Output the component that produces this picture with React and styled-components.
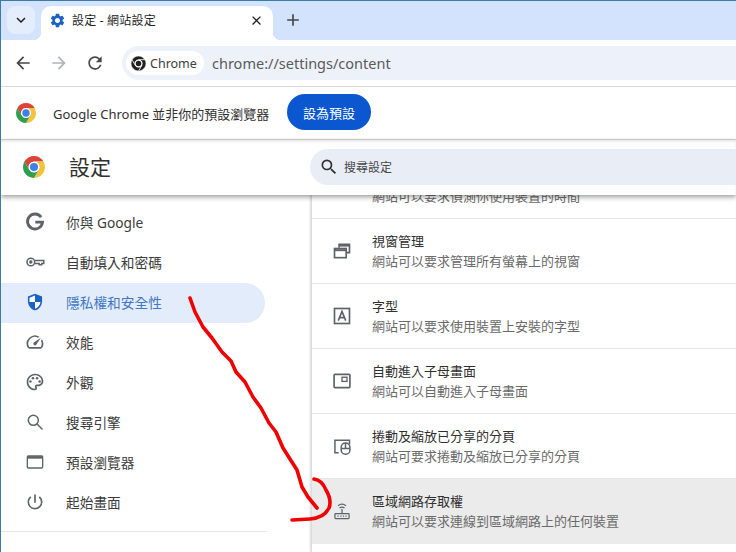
import React from 'react';
import styled, { createGlobalStyle } from 'styled-components';
import {
  MdSettings,
  MdSearch,
  MdClose,
  MdAdd,
  MdArrowBack,
  MdArrowForward,
  MdRefresh,
  MdKeyboardArrowDown,
  MdOutlineSpeed,
  MdOutlinePalette,
  MdOutlinePowerSettingsNew,
} from 'react-icons/md';

const GlobalStyle = createGlobalStyle`
  html, body {
    margin: 0;
    padding: 0;
    background: #fff;
    overflow: hidden;
  }
`;

const FONT = `"Noto Sans", "Noto Sans CJK TC", sans-serif`;

const Page = styled.div`
  position: relative;
  width: 736px;
  height: 552px;
  box-sizing: border-box;
  border-left: 1px solid #3a7ca5;
  border-top: 1px solid #3a7ca5;
  overflow: hidden;
  display: flex;
  flex-direction: column;
  font-family: ${FONT};
  color: #1f1f1f;
  background: #fff;
`;

const TabStrip = styled.div`
  height: 39px;
  background: #d3e3fd;
  display: flex;
  align-items: flex-end;
  padding-left: 6px;
  flex: none;
`;

const TabSearch = styled.div`
  width: 28px;
  height: 28px;
  margin-bottom: 6px;
  margin-right: 6px;
  border-radius: 8px;
  background: #e4edfc;
  display: flex;
  align-items: center;
  justify-content: center;
  color: #1f1f1f;
  font-size: 18px;
`;

const Tab = styled.div`
  position: relative;
  width: 232px;
  height: 34px;
  box-sizing: border-box;
  padding: 0 9px 6px 8px;
  background: #fff;
  border-radius: 10px 10px 0 0;
  display: flex;
  align-items: center;
  gap: 6px;
  font-size: 12px;
  color: #1f1f1f;

  &::before,
  &::after {
    content: '';
    position: absolute;
    bottom: 0;
    width: 8px;
    height: 8px;
  }
  &::before {
    left: -8px;
    background: radial-gradient(circle at 0 0, #d3e3fd 8px, #fff 8.5px);
  }
  &::after {
    right: -8px;
    background: radial-gradient(circle at 100% 0, #d3e3fd 8px, #fff 8.5px);
  }
`;

const TabTitle = styled.span`
  flex: 1;
  letter-spacing: 0.2px;
`;

const NewTab = styled.div`
  margin-left: 10px;
  margin-bottom: 6px;
  height: 28px;
  display: flex;
  align-items: center;
  font-size: 20px;
  color: #474747;
`;

const Toolbar = styled.div`
  height: 47px;
  flex: none;
  box-sizing: border-box;
  border-bottom: 1px solid #d9d9d9;
  display: flex;
  align-items: center;
  padding-left: 12px;
`;

const NavButton = styled.div`
  width: 20px;
  height: 20px;
  margin-right: 16px;
  font-size: 20px;
  display: flex;
  color: ${(p) => (p.$disabled ? '#b0b3b8' : '#474747')};
`;

const Omnibox = styled.div`
  flex: 1;
  height: 34px;
  margin-left: 1px;
  margin-right: -20px;
  border-radius: 17px;
  background: #edf2fa;
  display: flex;
  align-items: center;
  padding-left: 4px;
`;

const Chip = styled.div`
  width: 78px;
  height: 24px;
  box-sizing: border-box;
  border-radius: 12px;
  background: #fff;
  display: flex;
  align-items: center;
  gap: 4px;
  padding-left: 5px;
  font-size: 12.5px;
  color: #3c3c3c;
`;

const Url = styled.span`
  margin-left: 8px;
  font-size: 14.5px;
  color: #5a5a5a;
`;

const InfoBar = styled.div`
  height: 53px;
  flex: none;
  box-sizing: border-box;
  border-bottom: 1px solid #d4d4d4;
  display: flex;
  align-items: center;
  padding-left: 15px;
  font-size: 13px;
`;

const InfoText = styled.span`
  margin-left: 17px;
  width: 234px;
  white-space: nowrap;
  color: #303030;
`;

const DefaultButton = styled.div`
  width: 84px;
  height: 36px;
  margin-top: -2px;
  border-radius: 18px;
  background: #0b57d0;
  color: #fff;
  display: flex;
  align-items: center;
  justify-content: center;
  font-size: 13px;
`;

const SettingsHeader = styled.div`
  position: relative;
  z-index: 2;
  height: 55px;
  flex: none;
  box-sizing: border-box;
  background: #fff;
  box-shadow: 0 2px 5px rgba(0, 0, 0, 0.4), inset 0 2px 2px rgba(0, 0, 0, 0.08);
  display: flex;
  align-items: center;
  padding: 0 0 1px 22px;
`;

const HeaderTitle = styled.h1`
  margin: -3px 0 0 24px;
  width: 241px;
  font-size: 21px;
  font-weight: 400;
  color: #303030;
`;

const SearchBox = styled.div`
  flex: 1;
  height: 36px;
  margin-right: -20px;
  border-radius: 18px;
  background: #e9eef6;
  display: flex;
  align-items: center;
  gap: 5px;
  padding-left: 9px;
  font-size: 12px;
  color: #474747;

  svg {
    font-size: 20px;
    color: #303030;
  }
`;

const Body = styled.div`
  flex: 1;
  display: flex;
  min-height: 0;
`;

const Sidebar = styled.nav`
  width: 310px;
  flex: none;
  padding-top: 8px;
  box-sizing: border-box;
`;

const NavItem = styled.div`
  width: 264px;
  height: 40px;
  box-sizing: border-box;
  padding: 0 0 2px 24px;
  display: flex;
  align-items: center;
  gap: 21px;
  font-size: 13.7px;
  border-radius: ${(p) => (p.$active ? '0 20px 20px 0' : '0')};
  background: ${(p) => (p.$active ? '#e3ecfa' : 'transparent')};
  color: ${(p) => (p.$active ? '#3f78c4' : '#3c3c3c')};

  svg {
    width: 20px;
    height: 20px;
    flex: none;
    color: ${(p) => (p.$active ? '#1a62c5' : '#5f6368')};
  }
`;

const NavDivider = styled.div`
  width: 266px;
  height: 1px;
  margin-top: 8px;
  background: #e6e6e6;
`;

const Content = styled.main`
  flex: 1;
  min-width: 0;
  border-left: 1px solid #dcdcdc;
  box-shadow: -1px 0 2px rgba(0, 0, 0, 0.14);
  overflow: hidden;
`;

const Row = styled.div`
  height: ${(p) => (p.$clipped ? '24px' : '65px')};
  box-sizing: border-box;
  border-bottom: 1px solid ${(p) => (p.$selected ? 'transparent' : '#e6e6e6')};
  background: ${(p) => (p.$selected ? '#ebebeb' : '#fff')};
  display: flex;
  align-items: ${(p) => (p.$clipped ? 'flex-end' : 'center')};
  overflow: hidden;
  padding: ${(p) => (p.$clipped ? '0 0 12px 20px' : '0 0 0 20px')};
  gap: 20px;
`;

const RowIcon = styled.div`
  width: 20px;
  height: 20px;
  flex: none;
  color: #5f6368;

  svg {
    width: 20px;
    height: 20px;
    display: block;
  }
`;

const RowText = styled.div`
  display: flex;
  flex-direction: column;
  gap: 2px;
  padding-bottom: 1px;
  white-space: nowrap;
`;

const RowTitle = styled.div`
  font-size: 13px;
  line-height: 18px;
  color: #303030;
`;

const RowSub = styled.div`
  font-size: 13px;
  line-height: 18px;
  color: #6a6a6a;
`;

const Scribble = styled.svg`
  position: absolute;
  left: -1px;
  top: -1px;
  z-index: 3;
  pointer-events: none;
`;

const ChromeLogo = ({ size = 20, mono = false }) => {
  const seam = mono ? { stroke: '#fff', strokeWidth: 1 } : {};
  return (
    <svg width={size} height={size} viewBox="0 0 24 24" style={{ flex: 'none' }}>
      <path d="M22.39 6A12 12 0 0 0 1.61 6L6.8 15A6 6 0 0 1 12 6Z" fill={mono ? '#202020' : '#db4437'} {...seam} />
      <path d="M22.39 6H12A6 6 0 0 1 17.2 15L12 24A12 12 0 0 0 22.39 6Z" fill={mono ? '#202020' : '#f5c33b'} {...seam} />
      <path d="M1.61 6L6.8 15A6 6 0 0 0 17.2 15L12 24A12 12 0 0 1 1.61 6Z" fill={mono ? '#202020' : '#2f9e4f'} {...seam} />
      <circle cx="12" cy="12" r="5.6" fill="#fff" />
      <circle cx="12" cy="12" r="4.4" fill={mono ? '#202020' : '#3f7fe8'} />
    </svg>
  );
};

const GoogleG = () => (
  <svg viewBox="0 0 24 24" fill="none" stroke="currentColor" strokeWidth="3.4">
    <path d="M19.4 6.2A9 9 0 1 0 21 12.2H12.4" />
  </svg>
);

const KeyIcon = () => (
  <svg viewBox="0 0 24 24" fill="none" stroke="currentColor" strokeWidth="1.8">
    <circle cx="7" cy="12" r="4.6" />
    <circle cx="7" cy="12" r="1.2" fill="currentColor" />
    <path d="M11.6 10.2H22.5V13.8H20V15.4H17V13.8H11.6" />
  </svg>
);

const ShieldIcon = () => (
  <svg viewBox="0 0 24 24">
    <path d="M12 2L3.5 5.4V11c0 5.2 3.6 9.8 8.5 11 4.9-1.2 8.5-5.8 8.5-11V5.4Z" fill="currentColor" />
    <path d="M12 4.2V12H5.4V6.8ZM12 12H18.6C18.2 15.6 15.6 18.9 12 20Z" fill="#fff" />
  </svg>
);

const SearchThin = () => (
  <svg viewBox="0 0 24 24" fill="none" stroke="currentColor" strokeWidth="1.8">
    <circle cx="10" cy="10" r="6" />
    <path d="M14.5 14.5L21 21" />
  </svg>
);

const BrowserIcon = () => (
  <svg viewBox="0 0 24 24" fill="none" stroke="currentColor">
    <rect x="2.8" y="4.8" width="18.4" height="14.4" rx="1.2" strokeWidth="1.6" />
    <path d="M2.8 6.5H21.2" strokeWidth="3" />
  </svg>
);

const WindowsIcon = () => (
  <svg viewBox="0 0 24 24" fill="none" stroke="currentColor" strokeWidth="2">
    <path d="M8.5 8V4H21V14H17" />
    <path d="M8.5 5.5H21" strokeWidth="2.4" />
    <rect x="3" y="9" width="14" height="11" />
    <path d="M3 11H17" strokeWidth="2.4" />
  </svg>
);

const FontIcon = () => (
  <svg viewBox="0 0 24 24" fill="none" stroke="currentColor" strokeWidth="2">
    <rect x="3" y="3" width="18" height="18" />
    <path d="M7.5 17.5L12 6.5L16.5 17.5M9 14H15" />
  </svg>
);

const PipIcon = () => (
  <svg viewBox="0 0 24 24" fill="none" stroke="currentColor" strokeWidth="2">
    <rect x="2.5" y="4" width="19" height="16" rx="1" />
    <rect x="12" y="7.5" width="6" height="5" strokeWidth="1.6" />
  </svg>
);

const ScrollShareIcon = () => (
  <svg viewBox="0 0 24 24" fill="none" stroke="currentColor" strokeWidth="1.8">
    <path d="M8 20H3.5V5H21V10" />
    <rect x="11" y="8.5" width="10.5" height="13.5" rx="5.2" />
    <path d="M16.2 8.5V15M11 15H21.5" />
  </svg>
);

const RouterIcon = () => (
  <svg viewBox="0 0 24 24" fill="none" stroke="currentColor" strokeWidth="1.5">
    <rect x="3.5" y="15" width="17" height="6" rx="0.8" />
    <path d="M12 15V9.5" />
    <path d="M9 8.5a4.2 4.2 0 0 1 6 0M7.2 5.8a7 7 0 0 1 9.6 0" />
    <path d="M6.5 18H8M10 18H11.5M13 18H14.5M16 18H17.5" />
  </svg>
);

const navItems = [
  { icon: <GoogleG />, label: '你與 Google' },
  { icon: <KeyIcon />, label: '自動填入和密碼' },
  { icon: <ShieldIcon />, label: '隱私權和安全性', active: true },
  { icon: <MdOutlineSpeed />, label: '效能' },
  { icon: <MdOutlinePalette />, label: '外觀' },
  { icon: <SearchThin />, label: '搜尋引擎' },
  { icon: <BrowserIcon />, label: '預設瀏覽器' },
  { icon: <MdOutlinePowerSettingsNew />, label: '起始畫面' },
];

const rows = [
  { icon: <WindowsIcon />, title: '視窗管理', sub: '網站可以要求管理所有螢幕上的視窗' },
  { icon: <FontIcon />, title: '字型', sub: '網站可以要求使用裝置上安裝的字型' },
  { icon: <PipIcon />, title: '自動進入子母畫面', sub: '網站可以自動進入子母畫面' },
  { icon: <ScrollShareIcon />, title: '捲動及縮放已分享的分頁', sub: '網站可要求捲動及縮放已分享的分頁' },
  { icon: <RouterIcon />, title: '區域網路存取權', sub: '網站可以要求連線到區域網路上的任何裝置', selected: true },
];

const App = () => {
  return (
    <Page>
      <GlobalStyle />
      <TabStrip>
        <TabSearch>
          <MdKeyboardArrowDown />
        </TabSearch>
        <Tab>
          <MdSettings size={17} color="#1a62c5" />
          <TabTitle>設定 - 網站設定</TabTitle>
          <MdClose size={15} />
        </Tab>
        <NewTab>
          <MdAdd />
        </NewTab>
      </TabStrip>

      <Toolbar>
        <NavButton><MdArrowBack /></NavButton>
        <NavButton $disabled><MdArrowForward /></NavButton>
        <NavButton><MdRefresh /></NavButton>
        <Omnibox>
          <Chip>
            <ChromeLogo size={15} mono />
            Chrome
          </Chip>
          <Url>chrome://settings/content</Url>
        </Omnibox>
      </Toolbar>

      <InfoBar>
        <ChromeLogo size={20} />
        <InfoText>Google Chrome 並非你的預設瀏覽器</InfoText>
        <DefaultButton>設為預設</DefaultButton>
      </InfoBar>

      <SettingsHeader>
        <ChromeLogo size={22} />
        <HeaderTitle>設定</HeaderTitle>
        <SearchBox>
          <MdSearch />
          搜尋設定
        </SearchBox>
      </SettingsHeader>

      <Body>
        <Sidebar>
          {navItems.map((item) => (
            <NavItem key={item.label} $active={item.active}>
              {item.icon}
              {item.label}
            </NavItem>
          ))}
          <NavDivider />
        </Sidebar>
        <Content>
          <Row $clipped>
            <RowIcon />
            <RowText>
              <RowSub>網站可以要求偵測你使用裝置的時間</RowSub>
            </RowText>
          </Row>
          {rows.map((row) => (
            <Row key={row.title} $selected={row.selected}>
              <RowIcon>{row.icon}</RowIcon>
              <RowText>
                <RowTitle>{row.title}</RowTitle>
                <RowSub>{row.sub}</RowSub>
              </RowText>
            </Row>
          ))}
        </Content>
      </Body>

      <Scribble width="736" height="552" viewBox="0 0 736 552" fill="none" stroke="#f00000" strokeWidth="3.6" strokeLinecap="round" strokeLinejoin="round">
        <path d="M190 298L195 312L203 327L212 338L222 352L231 361L236 372L245 382L253 397L261 408L269 423L276 432L283 448L297 470L302 487L308 497L317 508" />
        <path d="M314 479Q322 480 326 490Q332 500 329 508Q324 518 310 519L292 520" />
      </Scribble>
    </Page>
  );
};

export default App;
